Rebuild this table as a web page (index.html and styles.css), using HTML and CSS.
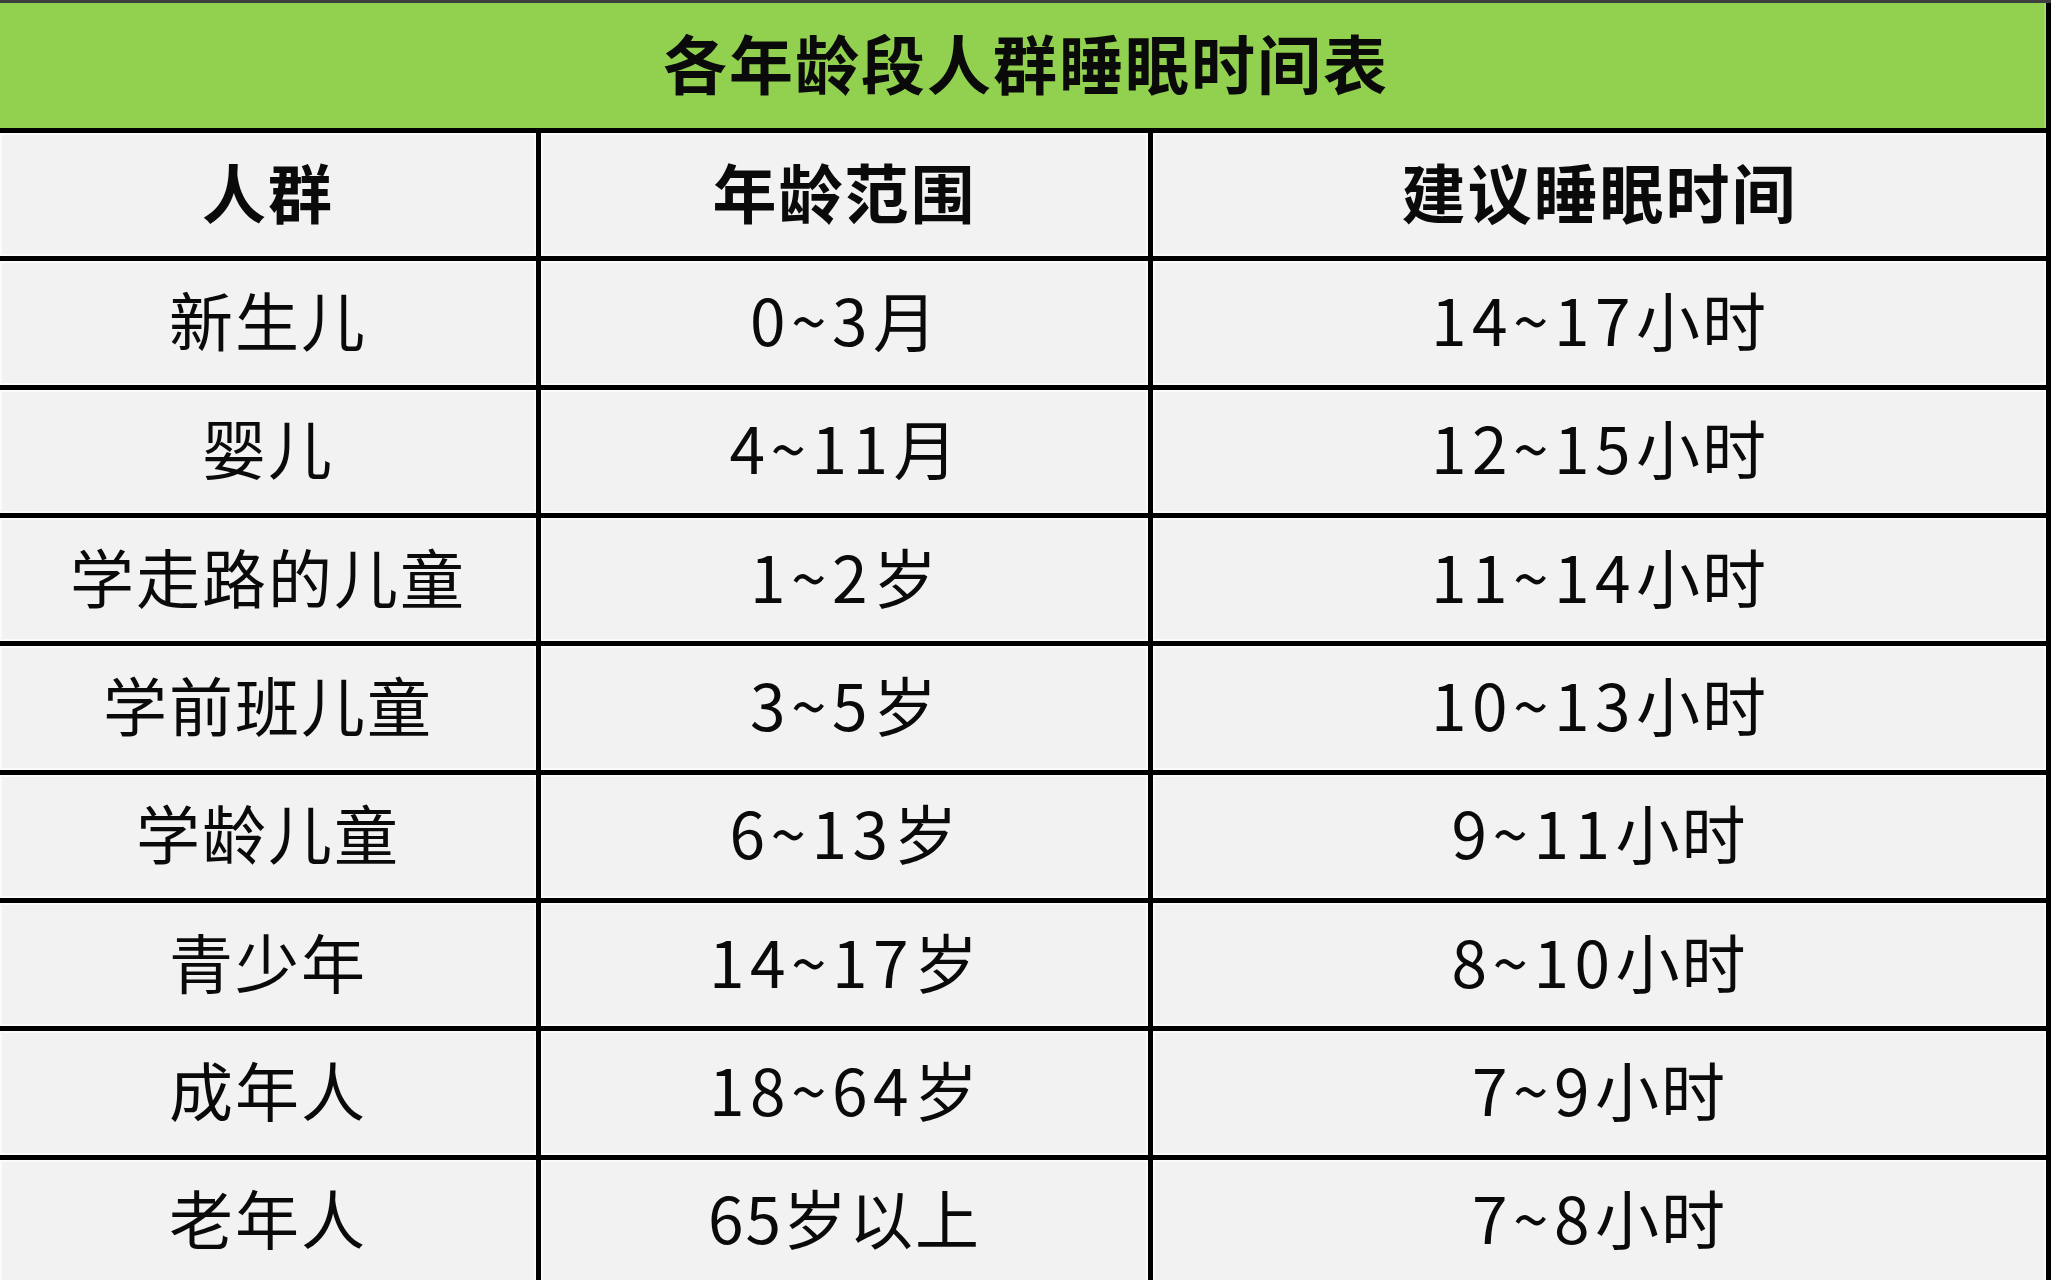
FILE: index.html
```html
<!DOCTYPE html>
<html lang="zh-CN">
<head>
<meta charset="utf-8">
<title>各年龄段人群睡眠时间表</title>
<link rel="stylesheet" href="styles.css">
</head>
<body>
<div class="sheet">
  <div class="title">各年龄段人群睡眠时间表</div>
  <div class="cell head">人群</div>
  <div class="cell head">年龄范围</div>
  <div class="cell head">建议睡眠时间</div>

  <div class="cell">新生儿</div>
  <div class="cell"><span class="num">0~3</span>月</div>
  <div class="cell"><span class="num">14~17</span>小时</div>

  <div class="cell">婴儿</div>
  <div class="cell"><span class="num">4~11</span>月</div>
  <div class="cell"><span class="num">12~15</span>小时</div>

  <div class="cell">学走路的儿童</div>
  <div class="cell"><span class="num">1~2</span>岁</div>
  <div class="cell"><span class="num">11~14</span>小时</div>

  <div class="cell">学前班儿童</div>
  <div class="cell"><span class="num">3~5</span>岁</div>
  <div class="cell"><span class="num">10~13</span>小时</div>

  <div class="cell">学龄儿童</div>
  <div class="cell"><span class="num">6~13</span>岁</div>
  <div class="cell"><span class="num">9~11</span>小时</div>

  <div class="cell">青少年</div>
  <div class="cell"><span class="num">14~17</span>岁</div>
  <div class="cell"><span class="num">8~10</span>小时</div>

  <div class="cell">成年人</div>
  <div class="cell"><span class="num">18~64</span>岁</div>
  <div class="cell"><span class="num">7~9</span>小时</div>

  <div class="cell">老年人</div>
  <div class="cell">65岁以上</div>
  <div class="cell"><span class="num">7~8</span>小时</div>
</div>
</body>
</html>
```
FILE: styles.css
```css
html, body {
  margin: 0;
  padding: 0;
  background: #f2f2f2;
  overflow: hidden;
}

.sheet {
  display: grid;
  grid-template-columns: 536px 607px 893px;
  grid-template-rows: 125px;
  grid-auto-rows: 123.35px;
  gap: 5px;
  width: 2046px;
  padding-right: 5px;
  background: #000;
  border-top: 3px solid #3e3e3e;
  font-family: "Noto Sans CJK SC", "Noto Sans", sans-serif;
  color: #0a0a0a;
}

.title {
  grid-column: 1 / -1;
  display: flex;
  align-items: center;
  justify-content: center;
  background: #92d050;
  box-shadow: inset -2px 0 0 #a3da68;
  font-size: 64px;
  font-weight: 700;
  letter-spacing: 2px;
  padding-left: 6px;
  padding-bottom: 10px;
}

.cell {
  display: flex;
  align-items: center;
  justify-content: center;
  background: #f2f2f2;
  box-shadow: inset 0 0 0 2px #fbfbfb;
  font-size: 64px;
  font-weight: 400;
  letter-spacing: 2px;
  padding-bottom: 10px;
}

.head {
  font-weight: 700;
}

.num {
  letter-spacing: 5.5px;
}
```
